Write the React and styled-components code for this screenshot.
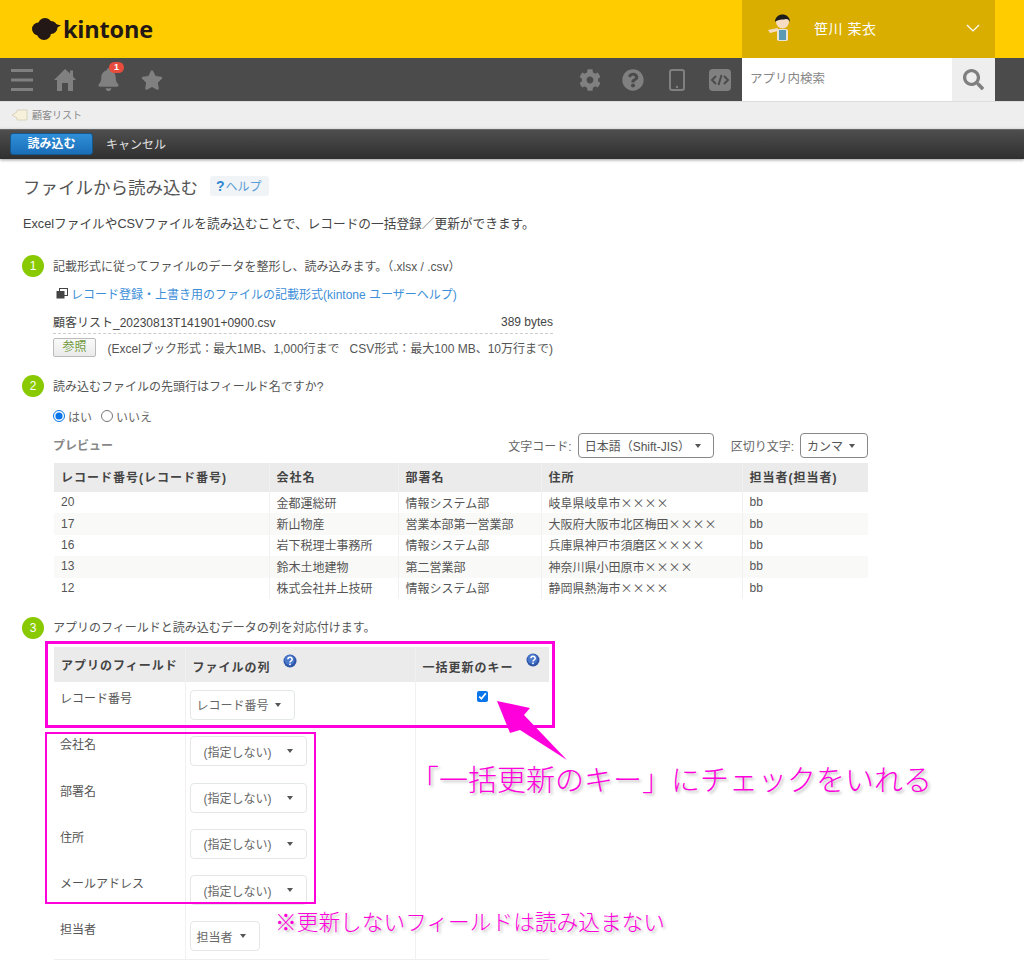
import React from 'react';
import styled, { createGlobalStyle } from 'styled-components';
import { FaBell, FaStar, FaCog, FaQuestionCircle, FaSearch } from 'react-icons/fa';

const GlobalStyle = createGlobalStyle`
  html, body {
    margin: 0;
    background: #fff;
    font-family: "Liberation Sans", "Noto Sans CJK JP", sans-serif;
    color: #444;
  }
`;

const Page = styled.div`
  position: relative;
  width: 1024px;
  height: 976px;
  overflow: hidden;
`;

const Header = styled.header`
  height: 58px;
  background: #ffcc00;
  display: flex;
  justify-content: space-between;
  padding-right: 29px;
  box-sizing: border-box;
`;

const Logo = styled.div`
  display: flex;
  align-items: center;
  padding-left: 32px;
  gap: 2px;
  font-family: "Open Sans", sans-serif;
  font-weight: 700;
  font-size: 23.5px;
  letter-spacing: -0.2px;
  color: #231815;
`;

const UserPanel = styled.div`
  width: 253px;
  background: #d9ae00;
  display: flex;
  align-items: center;
  box-sizing: border-box;
  padding: 0 15px 2px 25px;
  color: #fff;
  font-size: 14px;
`;

const UserName = styled.span`
  margin-left: 21px;
  flex: 1;
  letter-spacing: 0.5px;
`;

const Nav = styled.nav`
  height: 43px;
  background: #4b4b4b;
  display: flex;
  padding-right: 29px;
  box-sizing: border-box;
`;

const NavGroup = styled.div`
  display: flex;
  margin-left: ${props => (props.$right ? 'auto' : '0')};
`;

const NavIcon = styled.div`
  position: relative;
  width: 43.5px;
  height: 43px;
  display: flex;
  align-items: center;
  justify-content: center;
  color: #808080;
  font-size: ${props => props.size || 22}px;
`;

const Badge = styled.span`
  position: absolute;
  left: 22px;
  top: 4px;
  width: 15px;
  height: 11px;
  border-radius: 6px;
  background: #e74c3c;
  color: #fff;
  font-size: 9px;
  font-weight: 700;
  line-height: 11px;
  text-align: center;
`;

const Search = styled.div`
  width: 253px;
  display: flex;
`;

const SearchField = styled.div`
  flex: 1;
  background: #fff;
  color: #888;
  font-size: 12.5px;
  line-height: 43px;
  padding-left: 8px;
`;

const SearchButton = styled.div`
  width: 43px;
  background: #eee;
  color: #7f7f7f;
  font-size: 21px;
  display: flex;
  align-items: center;
  justify-content: center;
`;

const Breadcrumb = styled.div`
  height: 28px;
  background: #eee;
  border-top: 1px solid #ddd;
  box-sizing: border-box;
  display: flex;
  align-items: center;
  gap: 4px;
  padding: 0 0 2px 11px;
  font-size: 10px;
  color: #888;
`;

const Toolbar = styled.div`
  height: 30px;
  background: linear-gradient(#4e4e4e, #2f2f2f);
  border-top: 1px solid #666;
  box-sizing: border-box;
  box-shadow: 0 1px 3px rgba(0, 0, 0, 0.4);
  display: flex;
  align-items: center;
  padding: 0 0 2px 10px;
`;

const SubmitButton = styled.div`
  width: 83px;
  height: 22px;
  border-radius: 3px;
  background: linear-gradient(#2f8fd8, #1a6eb8);
  border: 1px solid #14588f;
  box-sizing: border-box;
  color: #fff;
  font-size: 12px;
  font-weight: 700;
  line-height: 20px;
  text-align: center;
`;

const CancelLink = styled.span`
  margin-left: 13px;
  color: #e0e0e0;
  font-size: 12px;
`;

const Content = styled.main`
  padding: 17px 0 0 22px;
`;

const TitleRow = styled.div`
  height: 20px;
  display: flex;
  align-items: center;
  gap: 12px;
`;

const Title = styled.h1`
  margin: 0;
  padding-left: 1px;
  font-size: 17.5px;
  font-weight: 400;
  color: #555;
`;

const HelpChip = styled.span`
  width: 59px;
  height: 20px;
  box-sizing: border-box;
  background: #f0f4f7;
  border-radius: 3px;
  padding-left: 6px;
  font-size: 12px;
  line-height: 20px;
  color: #5a9bd5;
  b {
    color: #2f86cf;
    font-size: 14px;
    margin-right: 1px;
  }
`;

const Description = styled.p`
  margin: 18px 0 21px 1px;
  font-size: 12.7px;
  line-height: 20px;
  color: #444;
`;

const StepHeader = styled.div`
  display: flex;
  align-items: center;
  gap: 9px;
  height: 22px;
  margin-top: ${props => props.top || 0}px;
  font-size: 12px;
  color: #555;
`;

const StepText = styled.span`
  margin-bottom: 2px;
`;

const StepNumber = styled.span`
  width: 22px;
  height: 22px;
  border-radius: 50%;
  background: #88c900;
  color: #fff;
  font-size: 12px;
  line-height: 22px;
  text-align: center;
`;

const StepBody = styled.div`
  margin-left: 31px;
`;

const LinkRow = styled.div`
  height: 20px;
  margin-top: 7px;
  padding: 0 0 2px 3px;
  box-sizing: border-box;
  display: flex;
  align-items: center;
  gap: 3px;
  font-size: 12px;
  color: #3d8fd8;
`;

const FileRow = styled.div`
  width: 500px;
  height: 22px;
  margin-top: 8px;
  padding-bottom: 2px;
  box-sizing: border-box;
  border-bottom: 1px dashed #ccc;
  display: flex;
  justify-content: space-between;
  align-items: center;
  font-size: 12px;
  color: #444;
`;

const BrowseRow = styled.div`
  width: 500px;
  height: 19px;
  margin-top: 4px;
  display: flex;
  align-items: center;
  justify-content: space-between;
  font-size: 12px;
  color: #555;
`;

const BrowseButton = styled.span`
  width: 43px;
  height: 19px;
  box-sizing: border-box;
  border: 1px solid #bbb;
  border-radius: 2px;
  background: linear-gradient(#fafafa, #eaeaea);
  color: #6f9a3a;
  font-size: 12px;
  line-height: 17px;
  text-align: center;
`;

const RadioRow = styled.div`
  height: 16px;
  margin-top: 11px;
  display: flex;
  align-items: center;
  font-size: 12px;
  color: #666;
`;

const RadioLabel = styled.label`
  display: flex;
  align-items: center;
  gap: 3px;
  margin-right: 9px;
  input {
    width: 12px;
    height: 12px;
    margin: 0;
    accent-color: #0a75e8;
  }
`;

const PreviewRow = styled.div`
  width: 815px;
  height: 25px;
  margin-top: 9px;
  display: flex;
  align-items: center;
  font-size: 12px;
  color: #666;
`;

const PreviewLabel = styled.span`
  flex: 1;
  padding-bottom: 2px;
  color: #888;
  font-weight: 700;
`;

const OptionLabel = styled.span`
  margin: 0 6px 0 ${props => props.gap || 0}px;
`;

const PreviewSelect = styled.div`
  width: ${props => props.width}px;
  height: 25px;
  box-sizing: border-box;
  border: 1px solid #888;
  border-radius: 4px;
  padding: 0 12px 0 6px;
  display: flex;
  justify-content: space-between;
  align-items: center;
  color: #555;
  font-size: 12px;
`;

const Caret = styled.i`
  width: 0;
  height: 0;
  border-left: 3.5px solid transparent;
  border-right: 3.5px solid transparent;
  border-top: 4.5px solid #555;
`;

const Table = styled.table`
  border-collapse: collapse;
  table-layout: fixed;
  font-size: 12px;
  color: #555;
  margin: ${props => props.top}px 0 0 1px;
  width: ${props => props.width}px;
  td, th {
    padding: 0 0 0 7px;
    text-align: left;
    border-right: 1px solid #f1f1f1;
  }
  th {
    background: #ebebeb;
    font-weight: 700;
    letter-spacing: 1px;
    color: #444;
  }
  td:last-child, th:last-child {
    border-right: 0;
  }
`;

const PreviewHead = styled.tr`
  height: 29px;
  th {
    padding-bottom: 2px;
  }
`;

const PreviewLine = styled.tr`
  height: 21.4px;
  background: ${props => (props.$odd ? '#f9f9f7' : '#fff')};
  td {
    padding-bottom: 1px;
  }
  td:nth-child(4) {
    font-family: "Noto Sans CJK JP", sans-serif;
  }
`;

const FieldHead = styled.tr`
  height: 35px;
  th {
    position: relative;
    padding-top: 4px;
  }
  th:first-child {
    padding-top: 0;
  }
`;

const FieldLine = styled.tr`
  height: 46.3px;
  td {
    vertical-align: top;
    padding-top: 8px;
  }
  &:last-child {
    border-bottom: 1px solid #eee;
  }
`;

const FieldName = styled.div`
  margin: 2px 0 0 -1px;
  height: 14px;
  line-height: 14px;
`;

const FieldSelect = styled.div`
  width: ${props => props.width}px;
  height: 30px;
  margin-left: -3px;
  box-sizing: border-box;
  background: #fff;
  border: 1px solid #e3e7e8;
  border-radius: 4px;
  padding: 0 13px 0 ${props => props.$left}px;
  display: flex;
  align-items: center;
  justify-content: space-between;
  color: #666;
`;

const KeyCheck = styled.input`
  display: block;
  width: 11px;
  height: 11px;
  margin: 1px 0 0 54px;
  accent-color: #0a75e8;
`;

const HintIcon = styled.svg`
  position: absolute;
  top: ${props => props.top}px;
  left: ${props => props.left}px;
`;

const PinkBox = styled.div`
  position: absolute;
  left: ${props => props.left}px;
  top: ${props => props.top}px;
  width: ${props => props.width}px;
  height: ${props => props.height}px;
  box-sizing: border-box;
  border: ${props => props.line}px solid #ff00dc;
`;

const Arrow = styled.svg`
  position: absolute;
  left: 490px;
  top: 695px;
`;

const Note = styled.div`
  position: absolute;
  left: ${props => props.left}px;
  top: ${props => props.top}px;
  font-size: ${props => props.size}px;
  font-weight: 300;
  line-height: 1.2;
  white-space: nowrap;
  color: #ff00dc;
  text-shadow: 2px 2px 3px rgba(0, 0, 0, 0.28);
`;

const DESCRIPTION = 'ExcelファイルやCSVファイルを読み込むことで、レコードの一括登録\uFF0F更新ができます。';
const STEP_ONE = '記載形式に従ってファイルのデータを整形し、読み込みます。\uFF08.xlsx / .csv\uFF09';
const LIMITS = '(Excelブック形式\uFF1A最大1MB、1,000行まで\u00A0\u00A0\u00A0CSV形式\uFF1A最大100 MB、10万行まで)';
const ENCODING = '日本語\uFF08Shift-JIS\uFF09';

const previewRows = [
  ['20', '金都運総研', '情報システム部', '岐阜県岐阜市××××', 'bb'],
  ['17', '新山物産', '営業本部第一営業部', '大阪府大阪市北区梅田××××', 'bb'],
  ['16', '岩下税理士事務所', '情報システム部', '兵庫県神戸市須磨区××××', 'bb'],
  ['13', '鈴木土地建物', '第二営業部', '神奈川県小田原市××××', 'bb'],
  ['12', '株式会社井上技研', '情報システム部', '静岡県熱海市××××', 'bb'],
];

const fieldRows = [
  { name: '会社名', value: '(指定しない)', width: 117, left: 13 },
  { name: '部署名', value: '(指定しない)', width: 117, left: 13 },
  { name: '住所', value: '(指定しない)', width: 117, left: 13 },
  { name: 'メールアドレス', value: '(指定しない)', width: 117, left: 13 },
  { name: '担当者', value: '担当者', width: 70, left: 6 },
];

const Hint = ({ top, left }) => (
  <HintIcon top={top} left={left} width="14" height="14" viewBox="0 0 14 14">
    <circle cx="7" cy="7" r="6.5" fill="#2d55a8" />
    <circle cx="6.5" cy="6" r="5" fill="#4a78cc" />
    <path d="M4.8 5.2a2.2 2 0 1 1 3.4 1.7c-.8.5-1.2.9-1.2 1.7" fill="none" stroke="#fff" strokeWidth="1.5" />
    <rect x="6.2" y="9.6" width="1.6" height="1.6" fill="#fff" />
  </HintIcon>
);

const App = () => {
  return (
    <Page>
      <GlobalStyle />
      <Header>
        <Logo>
          <svg width="29" height="22" viewBox="0 0 29 22">
            <g fill="#231815">
              <circle cx="6.5" cy="11" r="6.5" />
              <circle cx="13" cy="7" r="7" />
              <circle cx="19" cy="9.5" r="6.5" />
              <circle cx="12" cy="15" r="7" />
              <path d="M20 5l9 2.5-7 3.5z" />
            </g>
          </svg>
          kintone
        </Logo>
        <UserPanel>
          <svg width="26" height="28" viewBox="0 0 26 28">
            <rect x="10" y="15" width="11" height="12" rx="2" fill="#e8e4da" />
            <path d="M12 16h7v10h-7z" fill="#5b9ab5" />
            <path d="M1 16l10-2v3l-8 2z" fill="#f4dcc0" />
            <circle cx="15.5" cy="8" r="6.5" fill="#f6dcc3" />
            <path d="M8 8c0-10 15-10 15 0-1-2-2-3-4-3-3 1-8 0-11 3z" fill="#1c1c1c" />
          </svg>
          <UserName>笹川 茉衣</UserName>
          <svg width="14" height="8" viewBox="0 0 14 8">
            <path d="M1 1l6 6 6-6" fill="none" stroke="#fff" strokeWidth="1.2" />
          </svg>
        </UserPanel>
      </Header>

      <Nav>
        <NavGroup>
          <NavIcon>
            <svg width="22" height="22" viewBox="0 0 22 22">
              <path d="M0 1.5h22M0 11h22M0 20.5h22" stroke="#808080" strokeWidth="3" />
            </svg>
          </NavIcon>
          <NavIcon>
            <svg width="22" height="22" viewBox="0 0 22 22">
              <path fill="#808080" d="M11 0l5 4.6V1.5h3v5.9L22 11h-3v11h-5v-8H8v8H3V11H0z" />
            </svg>
          </NavIcon>
          <NavIcon size={23}>
            <FaBell />
            <Badge>1</Badge>
          </NavIcon>
          <NavIcon size={22}><FaStar /></NavIcon>
        </NavGroup>
        <NavGroup $right>
          <NavIcon><FaCog /></NavIcon>
          <NavIcon><FaQuestionCircle /></NavIcon>
          <NavIcon>
            <svg width="16" height="22" viewBox="0 0 16 22">
              <rect x="1" y="1" width="14" height="20" rx="2" fill="none" stroke="#808080" strokeWidth="2" />
              <circle cx="8" cy="18" r="1.2" fill="#808080" />
            </svg>
          </NavIcon>
          <NavIcon>
            <svg width="22" height="22" viewBox="0 0 22 22">
              <rect width="22" height="22" rx="4" fill="#808080" />
              <path d="M7 7l-4 4 4 4M15 7l4 4-4 4M12.5 6l-3 10" fill="none" stroke="#4b4b4b" strokeWidth="2" />
            </svg>
          </NavIcon>
        </NavGroup>
        <Search>
          <SearchField>アプリ内検索</SearchField>
          <SearchButton><FaSearch /></SearchButton>
        </Search>
      </Nav>

      <Breadcrumb>
        <svg width="17" height="12" viewBox="0 0 17 12">
          <path d="M1 6l5-3V1h10v10H6V9z" fill="#f7f1dc" stroke="#d8d2bd" />
        </svg>
        顧客リスト
      </Breadcrumb>

      <Toolbar>
        <SubmitButton>読み込む</SubmitButton>
        <CancelLink>キャンセル</CancelLink>
      </Toolbar>

      <Content>
        <TitleRow>
          <Title>ファイルから読み込む</Title>
          <HelpChip><b>?</b>ヘルプ</HelpChip>
        </TitleRow>
        <Description>{DESCRIPTION}</Description>

        <StepHeader>
          <StepNumber>1</StepNumber>
          <StepText>{STEP_ONE}</StepText>
        </StepHeader>
        <StepBody>
          <LinkRow>
            <svg width="12" height="11" viewBox="0 0 12 11">
              <rect x="3.5" y="0.5" width="8" height="7" fill="#fff" stroke="#444" />
              <rect x="0.5" y="3" width="8" height="7.5" fill="#444" />
            </svg>
            レコード登録・上書き用のファイルの記載形式(kintone ユーザーヘルプ)
          </LinkRow>
          <FileRow>
            <span>顧客リスト_20230813T141901+0900.csv</span>
            <span>389 bytes</span>
          </FileRow>
          <BrowseRow>
            <BrowseButton>参照</BrowseButton>
            <span>{LIMITS}</span>
          </BrowseRow>
        </StepBody>

        <StepHeader top={18}>
          <StepNumber>2</StepNumber>
          <StepText>読み込むファイルの先頭行はフィールド名ですか?</StepText>
        </StepHeader>
        <StepBody>
          <RadioRow>
            <RadioLabel><input type="radio" name="head" defaultChecked />はい</RadioLabel>
            <RadioLabel><input type="radio" name="head" />いいえ</RadioLabel>
          </RadioRow>
          <PreviewRow>
            <PreviewLabel>プレビュー</PreviewLabel>
            <OptionLabel>文字コード:</OptionLabel>
            <PreviewSelect width={136}>{ENCODING}<Caret /></PreviewSelect>
            <OptionLabel gap={17}>区切り文字:</OptionLabel>
            <PreviewSelect width={68}>カンマ<Caret /></PreviewSelect>
          </PreviewRow>
          <Table top={5} width={814}>
            <colgroup>
              <col style={{ width: 215 }} />
              <col style={{ width: 129 }} />
              <col style={{ width: 143 }} />
              <col style={{ width: 201 }} />
              <col />
            </colgroup>
            <thead>
              <PreviewHead>
                <th>レコード番号(レコード番号)</th>
                <th>会社名</th>
                <th>部署名</th>
                <th>住所</th>
                <th>担当者(担当者)</th>
              </PreviewHead>
            </thead>
            <tbody>
              {previewRows.map((row, index) => (
                <PreviewLine key={row[0]} $odd={index % 2 === 1}>
                  {row.map((cell) => <td key={cell}>{cell}</td>)}
                </PreviewLine>
              ))}
            </tbody>
          </Table>
        </StepBody>

        <StepHeader top={18}>
          <StepNumber>3</StepNumber>
          <StepText>アプリのフィールドと読み込むデータの列を対応付けます。</StepText>
        </StepHeader>
        <StepBody>
          <Table top={8} width={495}>
            <colgroup>
              <col style={{ width: 131 }} />
              <col style={{ width: 230 }} />
              <col />
            </colgroup>
            <thead>
              <FieldHead>
                <th>アプリのフィールド</th>
                <th>ファイルの列<Hint top={7} left={97} /></th>
                <th>一括更新のキー<Hint top={6} left={110} /></th>
              </FieldHead>
            </thead>
            <tbody>
              <FieldLine>
                <td><FieldName>レコード番号</FieldName></td>
                <td><FieldSelect width={105} $left={6}>レコード番号<Caret /></FieldSelect></td>
                <td><KeyCheck type="checkbox" defaultChecked /></td>
              </FieldLine>
              {fieldRows.map((row) => (
                <FieldLine key={row.name}>
                  <td><FieldName>{row.name}</FieldName></td>
                  <td><FieldSelect width={row.width} $left={row.left}>{row.value}<Caret /></FieldSelect></td>
                  <td />
                </FieldLine>
              ))}
            </tbody>
          </Table>
        </StepBody>
      </Content>

      <PinkBox left={45} top={641} width={510} height={87} line={3} />
      <PinkBox left={45} top={732} width={271} height={172} line={2} />
      <Arrow width="85" height="70" viewBox="0 0 85 70">
        <polygon points="7,6 40,13 34,20 77,65 30,35 20,38" fill="#ff00dc" />
      </Arrow>
      <Note left={410} top={764} size={29}>「一括更新のキー」にチェックをいれる</Note>
      <Note left={275} top={910} size={21.7}>※更新しないフィールドは読み込まない</Note>
    </Page>
  );
};

export default App;
